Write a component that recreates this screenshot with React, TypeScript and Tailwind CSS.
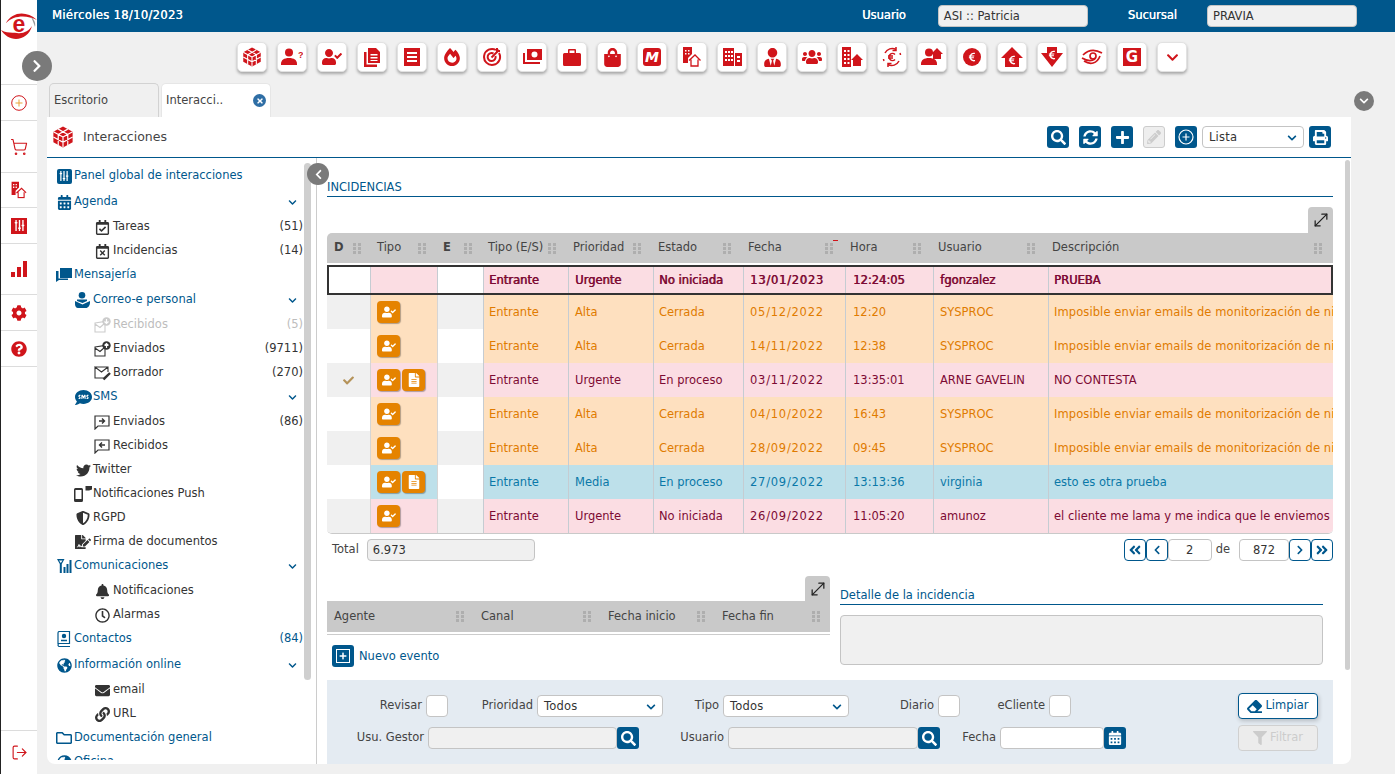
import type { ReactNode } from "react";
import { LogOut, MoveDiagonal, ShoppingCart } from "lucide-react";
import {
  FaAngleDoubleLeft,
  FaAngleDoubleRight,
  FaBell,
  FaCalendarAlt,
  FaCheck,
  FaChevronDown,
  FaChevronLeft,
  FaChevronRight,
  FaCog,
  FaEnvelope,
  FaEraser,
  FaEuroSign,
  FaFileAlt,
  FaFileSignature,
  FaFilter,
  FaFireAlt,
  FaGlobeAmericas,
  FaLink,
  FaPencilAlt,
  FaPlus,
  FaPrint,
  FaQuestionCircle,
  FaRegCalendarCheck,
  FaRegCalendarTimes,
  FaRegClock,
  FaRegFolder,
  FaSearch,
  FaShieldAlt,
  FaShoppingBag,
  FaSlidersH,
  FaSms,
  FaSyncAlt,
  FaTimes,
  FaTwitter,
  FaUserCheck,
  FaUserTie,
  FaUsers,
} from "react-icons/fa";

const RED = "#d0151b";

function Cube({ size = 18 }: { size?: number }) {
  return (
    <svg width={size} height={size} viewBox="0 0 24 24">
      <path d="M12 .5 22.500 6.200v11.600L12 23.500 1.500 17.800V6.200z" fill={RED} />
      <path
        d="M12 12v11M12 12 1.500 6.200M12 12l10.500-5.800M6.800 3.400l10.500 5.800M17.200 3.400 6.800 9.200M6.800 9.200v11.600M17.200 9.200v11.600M1.500 12 12 17.800 22.500 12"
        stroke="#fff"
        strokeWidth="1.300"
        fill="none"
      />
    </svg>
  );
}

function Person({ extra }: { extra?: ReactNode }) {
  return (
    <svg width="22" height="20" viewBox="0 0 22 20" fill={RED}>
      <circle cx="8" cy="5.500" r="4" />
      <path d="M0 17c0-4 3-6 8-6s8 2 8 6v1H0z" />
      {extra}
    </svg>
  );
}

function Target() {
  return (
    <svg width="20" height="20" viewBox="0 0 20 20" fill="none" stroke={RED} strokeWidth="2">
      <path d="M14 3a8 8 0 1 0 3 3" />
      <path d="M11.500 6.500A4 4 0 1 0 13.500 9" />
      <path d="M9.500 10.500 17 3" />
      <path d="M15 1v3h3" />
    </svg>
  );
}

function Money() {
  return (
    <svg width="20" height="18" viewBox="0 0 20 18" fill={RED}>
      <path d="M5 1h15v11H5zM9.500 6.500a3 3 0 1 0 6 0 3 3 0 1 0-6 0" fillRule="evenodd" />
      <path d="M1 5h2v9h15v2H1z" />
    </svg>
  );
}

function Receipt() {
  return (
    <svg width="16" height="18" viewBox="0 0 16 18" fill={RED}>
      <path d="M0 0h16v18H0zM3 4v2h10V4zM3 8v2h10V8zM3 12v2h10v-2z" fillRule="evenodd" />
    </svg>
  );
}

function Docs() {
  return (
    <svg width="16" height="19" viewBox="0 0 16 19" fill={RED}>
      <path d="M4 0h8l4 4v11H4zM6.500 6v1.500h7V6zM6.500 9v1.500h7V9zM6.500 12v1h7v-1z" fillRule="evenodd" />
      <path d="M0 4h2.500v12.500H13V19H0z" />
    </svg>
  );
}

function Briefcase() {
  return (
    <svg width="18" height="17" viewBox="0 0 18 17" fill={RED}>
      <path d="M6 0h6a1 1 0 0 1 1 1v3h3.500a1.500 1.500 0 0 1 1.500 1.500v10a1.500 1.500 0 0 1-1.500 1.500h-15A1.500 1.500 0 0 1 0 15.500v-10A1.500 1.500 0 0 1 1.500 4H5V1a1 1 0 0 1 1-1zm.5 1.500V4h5V1.500z" fillRule="evenodd" />
    </svg>
  );
}

function HouseBuilding() {
  return (
    <svg width="18" height="20" viewBox="0 0 18 20">
      <path d="M0 0h9v7L5 11v5H0z" fill={RED} />
      <path d="M2 3h1.500v1.500H2zM5 3h1.500v1.500H5zM2 6h1.500v1.500H2zM5 6h1.500v1.500H5z" fill="#fff" />
      <path d="M6 13.500 12 8l5.500 5.500M8 12.500V19h7v-6.500" fill="none" stroke={RED} strokeWidth="1.300" />
    </svg>
  );
}

function Office() {
  return (
    <svg width="19" height="18" viewBox="0 0 19 18" fill={RED}>
      <path d="M0 0h11v18H0zM2 3v2h2V3zM5 3v2h2V3zM8 3v2h2V3zM2 7v2h2V7zM5 7v2h2V7zM8 7v2h2V7zM2 11v2h2v-2zM5 11v2h2v-2zM8 11v2h2v-2z" fillRule="evenodd" />
      <path d="M12 5h7v13h-7zM14 8v2h3V8zM14 12v2h3v-2z" fillRule="evenodd" />
    </svg>
  );
}

function BuildingUp() {
  return (
    <svg width="21" height="20" viewBox="0 0 21 20" fill={RED}>
      <path d="M0 0h9v20H0zM2 3v2h2V3zM5.500 3v2h2V3zM2 7v2h2V7zM5.500 7v2h2V7zM2 11v2h2v-2zM5.500 11v2h2v-2zM2 15v2h2v-2zM5.500 15v2h2v-2z" fillRule="evenodd" />
      <path d="M15 7l6 6h-2v6h-8v-6H9z" />
    </svg>
  );
}

function EuroCycle() {
  return (
    <svg width="22" height="22" viewBox="0 0 22 22" fill="none" stroke={RED} strokeWidth="1.500">
      <path d="M4 7a8 8 0 0 1 11-3.500M18 15a8 8 0 0 1-11 3.500M2.500 13a8.500 8.500 0 0 0 .5 2M19.500 9a8.500 8.500 0 0 0-.5-2" />
      <path d="M15 1v3.500h-3.500M7 21v-3.500h3.500" />
      <path d="M14 8.500A3.500 3.500 0 1 0 14 13.500M7 10h5M7 12h5" />
    </svg>
  );
}

function ArrowEuro({ down }: { down?: boolean }) {
  return (
    <div className="relative flex h-5 w-6 items-center justify-center">
      <svg width="24" height="20" viewBox="0 0 24 20" fill={RED}>
        <path d={down ? "M7 0h10v6h6L12 20 1 6h6z" : "M12 0l11 11h-4v9H5v-9H1z"} />
      </svg>
      <FaEuroSign className={`absolute text-[10px] text-white ${down ? "top-[3px]" : "top-[8px]"}`} />
    </div>
  );
}

function EyeMini() {
  return (
    <svg width="22" height="18" viewBox="0 0 22 18" fill="none" stroke={RED} strokeWidth="1.700">
      <path d="M2 7c5-5 12-6 19-2M3 13c6 4 13 3 16-5M1 10c5 3 10 3 13 1" />
      <circle cx="12" cy="8" r="3" />
    </svg>
  );
}

function Logo() {
  return (
    <svg width="36" height="28" viewBox="0 0 36 28">
      <path d="M5 12C11 1 25-1 36 9 26 4 13 4 5 12z" fill={RED} />
      <path d="M30 6c3 2 5 6 4 10-1-3-2-6-4-10z" fill="#9a9a9a" />
      <path d="M0 19c6 4 12 2 16 3 6 1 12-2 15-7-2 8-9 13-16 13C9 28 3 24 0 19z" fill={RED} />
      <text x="18" y="21" textAnchor="middle" fontSize="23" fontWeight="700" fontFamily="'Liberation Sans', sans-serif" fill={RED}>
        e
      </text>
    </svg>
  );
}

function Grip() {
  return (
    <svg width="8" height="11" viewBox="0 0 8 11" fill="#aeaeae" className="shrink-0">
      <path d="M0 0h3v3H0zM5 0h3v3H5zM0 4h3v3H0zM5 4h3v3H5zM0 8h3v3H0zM5 8h3v3H5z" />
    </svg>
  );
}

function Bubbles() {
  return (
    <svg width="16" height="14" viewBox="0 0 16 14" fill="currentColor">
      <path d="M4 0h12v10H4z" />
      <path d="M0 3h2.500v7.500H12V12H3l-3 2z" />
    </svg>
  );
}

function PersonMail() {
  return (
    <svg width="16" height="16" viewBox="0 0 16 16" fill="currentColor">
      <circle cx="7" cy="3.300" r="3.300" />
      <path d="M2 7.500h10V9L7.500 11 2 9z" />
      <path d="M0 9l7.500 3.500L15 9v1.500c0 3-2 5.500-4 5.500H3c-2 0-3-2-3-4z" />
    </svg>
  );
}

function MailBadge({ up, className }: { up?: boolean; className?: string }) {
  return (
    <svg width="17" height="16" viewBox="0 0 17 16" className={className}>
      <path d="M1 6l10-1.500V15H1zM1 7l5 3.500L11 6" fill="none" stroke="currentColor" strokeWidth="1.100" />
      <circle cx="12.500" cy="4.500" r="4.200" fill="currentColor" />
      <path d={up ? "M12.500 7V2.500M10.500 4.500l2-2 2 2" : "M12.500 2v4.500M10.500 4.500l2 2 2-2"} stroke="#fff" strokeWidth="1.200" fill="none" />
    </svg>
  );
}

function MailPencil() {
  return (
    <svg width="17" height="16" viewBox="0 0 17 16" fill="none" stroke="currentColor">
      <path d="M1 2h13v5M14 9.500 10 13H1V2l6.500 5L14 2" strokeWidth="1.100" />
      <path d="M9.500 14.500 16 8" strokeWidth="2.400" />
    </svg>
  );
}

function MsgArrow({ left }: { left?: boolean }) {
  return (
    <svg width="16" height="15" viewBox="0 0 16 15" fill="none" stroke="currentColor" strokeWidth="1.200">
      <path d="M1 1h14v10H4l-3 3z" />
      <path d={left ? "M11 6H5.500M8 3.500 5.500 6 8 8.500" : "M5 6h5.500M8 3.500 10.500 6 8 8.500"} strokeWidth="1.400" />
    </svg>
  );
}

function PushIcon() {
  return (
    <svg width="18" height="16" viewBox="0 0 18 16" fill="currentColor">
      <path d="M1.500 2h6A1.500 1.500 0 0 1 9 3.500v11A1.500 1.500 0 0 1 7.500 16h-6A1.500 1.500 0 0 1 0 14.500v-11A1.500 1.500 0 0 1 1.500 2zM1.500 4v9h6V4z" fillRule="evenodd" />
      <path d="M11.500 0H18v3.500l-3 1h-3.500z" />
    </svg>
  );
}

function Antenna() {
  return (
    <svg width="15" height="14" viewBox="0 0 15 14" fill="currentColor">
      <path d="M0 0h7.500L4.800 5v9H2.800V5zM2 1.500l1.800 2.500 1.700-2.500z" fillRule="evenodd" />
      <path d="M6.500 8h2v6h-2zM9.500 5h2v9h-2zM12.500 1h2v13h-2z" />
    </svg>
  );
}

function BookIcon() {
  return (
    <svg width="14" height="16" viewBox="0 0 14 16" fill="none" stroke="currentColor" strokeWidth="1.200">
      <path d="M1 13V2a1.500 1.500 0 0 1 1.500-1.500h10V12.500h-10A1.500 1.500 0 0 0 2.500 15.500h10.500" />
      <circle cx="7" cy="5" r="1.600" fill="currentColor" />
      <path d="M4 9.500h6" strokeWidth="1.600" />
    </svg>
  );
}

const redIcon = "text-[20px] text-[#d0151b]";

const toolbarIcons: ReactNode[] = [
  <Cube key="cube" size={20} />,
  <Person
    key="question"
    extra={
      <text x="17" y="11" fontSize="9" fontWeight="700" fontFamily="'Liberation Sans', sans-serif" fill={RED}>
        ?
      </text>
    }
  />,
  <FaUserCheck key="check" className={redIcon} />,
  <Docs key="docs" />,
  <Receipt key="receipt" />,
  <FaFireAlt key="fire" className="text-[18px] text-[#d0151b]" />,
  <Target key="target" />,
  <Money key="money" />,
  <Briefcase key="case" />,
  <FaShoppingBag key="bag" className="text-[19px] text-[#d0151b]" />,
  <div key="m" className="flex h-[18px] w-[18px] items-center justify-center rounded-[3px] bg-[#d0151b] text-[14px] font-bold italic text-white">
    M
  </div>,
  <HouseBuilding key="hb" />,
  <Office key="office" />,
  <FaUserTie key="tie" className="text-[19px] text-[#d0151b]" />,
  <FaUsers key="users" className={redIcon} />,
  <BuildingUp key="bup" />,
  <EuroCycle key="cycle" />,
  <Person key="pup" extra={<path d="M16 1l6 6h-2v5h-8V7h-2z" fill={RED} />} />,
  <div key="euro" className="flex h-[18px] w-[18px] items-center justify-center rounded-full bg-[#d0151b]">
    <FaEuroSign className="text-[10px] text-white" />
  </div>,
  <ArrowEuro key="up" />,
  <ArrowEuro key="down" down />,
  <EyeMini key="eye" />,
  <div key="g" className="flex h-[18px] w-[18px] items-center justify-center bg-[#d0151b] text-[15px] font-bold text-white">
    G
  </div>,
  <FaChevronDown key="more" className="text-[13px] text-[#d0151b]" />,
];

type MenuRow = {
  label: string;
  level: 1 | 2 | 3;
  icon: ReactNode;
  count?: string;
  open?: boolean;
  gap?: string;
  muted?: boolean;
  blue?: boolean;
};

const menu: MenuRow[] = [
  { label: "Panel global de interacciones", level: 1, blue: true, icon: <div className="flex h-[15px] w-[15px] items-center justify-center rounded-[2px] bg-[#00578c]"><FaSlidersH className="rotate-90 text-[10px] text-white" /></div> },
  { label: "Agenda", level: 1, blue: true, open: true, gap: "mt-[2px]", icon: <FaCalendarAlt className="text-[15px] text-[#00578c]" /> },
  { label: "Tareas", level: 3, count: "(51)", gap: "mt-px", icon: <FaRegCalendarCheck className="text-[15px]" /> },
  { label: "Incidencias", level: 3, count: "(14)", icon: <FaRegCalendarTimes className="text-[15px]" /> },
  { label: "Mensajería", level: 1, blue: true, icon: <Bubbles /> },
  { label: "Correo-e personal", level: 2, blue: true, open: true, gap: "mt-px", icon: <PersonMail /> },
  { label: "Recibidos", level: 3, count: "(5)", muted: true, gap: "mt-px", icon: <MailBadge className="text-[#ccc]" /> },
  { label: "Enviados", level: 3, count: "(9711)", icon: <MailBadge up /> },
  { label: "Borrador", level: 3, count: "(270)", icon: <MailPencil /> },
  { label: "SMS", level: 2, blue: true, open: true, icon: <FaSms className="text-[17px] text-[#00578c]" /> },
  { label: "Enviados", level: 3, count: "(86)", gap: "mt-px", icon: <MsgArrow /> },
  { label: "Recibidos", level: 3, icon: <MsgArrow left /> },
  { label: "Twitter", level: 2, icon: <FaTwitter className="text-[15px]" /> },
  { label: "Notificaciones Push", level: 2, icon: <PushIcon /> },
  { label: "RGPD", level: 2, icon: <FaShieldAlt className="text-[14px]" /> },
  { label: "Firma de documentos", level: 2, icon: <FaFileSignature className="text-[16px]" /> },
  { label: "Comunicaciones", level: 1, blue: true, open: true, icon: <Antenna /> },
  { label: "Notificaciones", level: 3, gap: "mt-px", icon: <FaBell className="text-[15px]" /> },
  { label: "Alarmas", level: 3, icon: <FaRegClock className="text-[15px]" /> },
  { label: "Contactos", level: 1, blue: true, count: "(84)", icon: <BookIcon /> },
  { label: "Información online", level: 1, blue: true, open: true, gap: "mt-[2px]", icon: <FaGlobeAmericas className="text-[15px] text-[#00578c]" /> },
  { label: "email", level: 3, gap: "mt-px", icon: <FaEnvelope className="text-[15px]" /> },
  { label: "URL", level: 3, icon: <FaLink className="text-[15px]" /> },
  { label: "Documentación general", level: 1, blue: true, icon: <FaRegFolder className="text-[16px] text-[#00578c]" /> },
  { label: "Oficina", level: 1, blue: true, icon: <FaGlobeAmericas className="text-[15px] text-[#00578c]" /> },
];

function SidebarRow({ row }: { row: MenuRow }) {
  const indent = row.level === 1 ? "pl-0" : row.level === 2 ? "pl-[19px]" : "pl-[38px]";
  const text = row.muted ? "text-[#bdbdbd]" : row.blue ? "text-[#00578c]" : "text-[#333]";
  return (
    <div className={`flex h-6 shrink-0 items-center ${indent} ${row.gap ?? ""} ${text}`}>
      <span className="flex w-[18px] shrink-0 items-center justify-center">{row.icon}</span>
      <span className={`whitespace-nowrap ${row.level === 3 ? "ml-[2px]" : "ml-[1px]"}`}>{row.label}</span>
      {row.open && <FaChevronDown className="ml-auto mr-[6px] text-[9px] text-[#00578c]" />}
      {row.count && <span className="ml-auto">{row.count}</span>}
    </div>
  );
}

const tableCols = "grid grid-cols-[43px_67px_46px_85px_85px_90px_102px_88px_115px_1fr]";

const heads = [
  { label: "D", cls: "pl-[7px] pr-[9px] font-bold" },
  { label: "Tipo", cls: "pl-[7px] pr-[11px]" },
  { label: "E", cls: "pl-[6px] pr-[11px] font-bold" },
  { label: "Tipo (E/S)", cls: "pl-[5px] pr-[12px]" },
  { label: "Prioridad", cls: "pl-[5px] pr-[12px]" },
  { label: "Estado", cls: "pl-[5px] pr-[12px]" },
  { label: "Fecha", cls: "relative pl-[5px] pr-[12px]" },
  { label: "Hora", cls: "pl-[5px] pr-[12px]" },
  { label: "Usuario", cls: "pl-[5px] pr-[13px]" },
  { label: "Descripción", cls: "pl-[4px] pr-[11px]" },
];

type Tone = "pink" | "orange" | "blue";

const tones: Record<Tone, string> = {
  pink: "bg-[#fbdde3] text-[#7d0a33]",
  orange: "bg-[#fee0bf] text-[#e07b00]",
  blue: "bg-[#bde0ea] text-[#0a78a8]",
};

const cellStyles = [
  "pl-[5px]",
  "pl-[6px]",
  "pl-[5px]",
  "pl-[6px] tracking-[0.75px]",
  "pl-[7px]",
  "pl-[6px]",
  "pl-[5px]",
];

const orangeDesc = "Imposible enviar emails de monitorización de niveles";

const rows: { tone: Tone; cells: string[]; doc?: boolean; done?: boolean }[] = [
  { tone: "orange", cells: ["Entrante", "Alta", "Cerrada", "05/12/2022", "12:20", "SYSPROC", orangeDesc] },
  { tone: "orange", cells: ["Entrante", "Alta", "Cerrada", "14/11/2022", "12:38", "SYSPROC", orangeDesc] },
  { tone: "pink", done: true, doc: true, cells: ["Entrante", "Urgente", "En proceso", "03/11/2022", "13:35:01", "ARNE GAVELIN", "NO CONTESTA"] },
  { tone: "orange", cells: ["Entrante", "Alta", "Cerrada", "04/10/2022", "16:43", "SYSPROC", orangeDesc] },
  { tone: "orange", cells: ["Entrante", "Alta", "Cerrada", "28/09/2022", "09:45", "SYSPROC", orangeDesc] },
  { tone: "blue", doc: true, cells: ["Entrante", "Media", "En proceso", "27/09/2022", "13:13:36", "virginia", "esto es otra prueba"] },
  { tone: "pink", cells: ["Entrante", "Urgente", "No iniciada", "26/09/2022", "11:05:20", "amunoz", "el cliente me lama y me indica que le enviemos la factura"] },
];

function Cell({ children, tone, className }: { children: ReactNode; tone: Tone; className?: string }) {
  return (
    <div className={`flex min-w-0 items-center overflow-hidden whitespace-nowrap border-l border-[#c5ccd2] pt-[2px] ${tones[tone]} ${className ?? ""}`}>
      {children}
    </div>
  );
}

function Badge({ children }: { children: ReactNode }) {
  return (
    <span className="flex h-[22px] w-[23px] items-center justify-center rounded-[4px] bg-[#e58300] text-[14px] text-white shadow-[1px_1px_1px_rgba(0,0,0,0.3)]">
      {children}
    </span>
  );
}

function BlueBtn({ children }: { children: ReactNode }) {
  return (
    <span className="flex h-[22px] w-[22px] shrink-0 items-center justify-center rounded-[3px] bg-[#00578c] text-[15px] text-white">
      {children}
    </span>
  );
}

function PagerBtn({ children }: { children: ReactNode }) {
  return (
    <span className="flex h-[22px] w-[22px] items-center justify-center rounded-[4px] border border-[#00578c] bg-white text-[#00578c]">
      {children}
    </span>
  );
}

function Field({ className, children }: { className: string; children?: ReactNode }) {
  return (
    <div className={`flex h-[22px] shrink-0 items-center rounded-[4px] border border-[#c4c4c4] px-[5px] pt-px ${className}`}>
      {children}
    </div>
  );
}

function SelectBox({ className, label }: { className: string; label: string }) {
  return (
    <Field className={`bg-white ${className}`}>
      <span className="ml-px tracking-[0.2px]">{label}</span>
      <FaChevronDown className="ml-auto mr-[1px] text-[10px] text-[#00578c]" />
    </Field>
  );
}

function Label({ className, children }: { className: string; children: ReactNode }) {
  return <span className={`mr-1 shrink-0 text-right text-[#444] ${className}`}>{children}</span>;
}

function RailItem({ className, children }: { className: string; children: ReactNode }) {
  return (
    <div className={`flex shrink-0 items-center justify-center border-b border-[#dcdcdc] ${className}`}>{children}</div>
  );
}

export default function App() {
  return (
    <div className="relative flex h-screen w-full overflow-hidden bg-[#f0f0f0] font-['DejaVu_Sans',sans-serif] text-[11.5px] text-[#333]">
      <aside className="flex w-[37px] shrink-0 flex-col border-l border-[#222] bg-white">
        <div className="h-[85px] shrink-0 border-b border-[#dcdcdc] pt-[11px]">
          <Logo />
        </div>
        <RailItem className="h-9">
          <svg width="16" height="16" viewBox="0 0 16 16" fill="none" stroke={RED}>
            <circle cx="8" cy="8" r="7.300" />
            <path d="M8 4.500v7M4.500 8h7" stroke="#e9a23b" />
          </svg>
        </RailItem>
        <RailItem className="h-[52px]">
          <ShoppingCart size={18} color={RED} strokeWidth={1.5} />
        </RailItem>
        <RailItem className="h-[35px]">
          <div className="scale-[0.85]">
            <HouseBuilding />
          </div>
        </RailItem>
        <RailItem className="h-9">
          <div className="flex h-[16px] w-[16px] items-center justify-center bg-[#d0151b]">
            <FaSlidersH className="rotate-90 text-[11px] text-white" />
          </div>
        </RailItem>
        <RailItem className="h-[51px]">
          <svg width="16" height="16" viewBox="0 0 16 16" fill={RED}>
            <path d="M0 11h4v5H0zM6 6h4v10H6zM12 0h4v16h-4z" />
          </svg>
        </RailItem>
        <RailItem className="h-9">
          <FaCog className="text-[16px] text-[#d0151b]" />
        </RailItem>
        <RailItem className="h-9">
          <FaQuestionCircle className="text-[16px] text-[#d0151b]" />
        </RailItem>
        <div className="mt-auto flex h-[44px] items-center justify-center border-t border-[#dcdcdc]">
          <LogOut size={17} color={RED} strokeWidth={1.6} />
        </div>
      </aside>

      <div className="flex min-w-0 flex-1 flex-col">
        <header className="flex h-8 shrink-0 items-center bg-[#00578c] pl-[15px] pr-[38px] text-white">
          <span className="tracking-[0.35px] [text-shadow:0.3px_0_0_currentColor]">Miércoles 18/10/2023</span>
          <span className="ml-auto [text-shadow:0.3px_0_0_currentColor]">Usuario</span>
          <div className="ml-[32px] flex h-[22px] w-[150px] items-center rounded-[4px] border border-[#c4c4c4] bg-[#f0f0f0] px-[5px] pt-px text-[#333]">
            ASI :: Patricia
          </div>
          <span className="ml-[40px] [text-shadow:0.3px_0_0_currentColor]">Sucursal</span>
          <div className="ml-[30px] flex h-[22px] w-[150px] items-center rounded-[4px] border border-[#c4c4c4] bg-[#f0f0f0] px-[5px] pt-px text-[#333]">
            PRAVIA
          </div>
        </header>

        <div className="flex h-[51px] shrink-0 gap-[10px] pl-[200px] pt-[10px]">
          {toolbarIcons.map((icon, i) => (
            <div
              key={i}
              className="flex h-[30px] w-[30px] shrink-0 items-center justify-center rounded-[5px] border border-[#e2e2e2] bg-white shadow-[0_2px_3px_rgba(0,0,0,0.3)]"
            >
              {icon}
            </div>
          ))}
        </div>

        <div className="flex h-[34px] shrink-0 gap-[2px] pl-[12px]">
          <div className="flex w-[110px] items-center rounded-t-[5px] border border-b-0 border-[#d2d2d2] pl-[4px] text-[#444]">
            Escritorio
          </div>
          <div className="flex w-[110px] items-center rounded-t-[5px] border border-b-0 border-[#e6e6e6] bg-white pl-[4px] text-[#444]">
            Interacci..
            <span className="ml-auto mr-[4px] flex h-[13px] w-[13px] items-center justify-center rounded-full bg-[#2f6ea5]">
              <FaTimes className="text-[8px] text-white" />
            </span>
          </div>
        </div>

        <div className="ml-[10px] flex h-[647px] w-[1304px] shrink-0 flex-col overflow-hidden rounded-b-[8px] bg-white">
          <div className="flex h-[41px] shrink-0 items-center border-b border-[#00578c] pl-[5px] pr-[20px]">
            <Cube size={22} />
            <span className="ml-[9px] text-[12.5px] text-[#444]">Interacciones</span>
            <div className="ml-auto flex items-center">
              <BlueBtn><FaSearch /></BlueBtn>
              <span className="ml-[10px]"><BlueBtn><FaSyncAlt /></BlueBtn></span>
              <span className="ml-[10px]"><BlueBtn><FaPlus /></BlueBtn></span>
              <span className="ml-[10px] flex h-[22px] w-[22px] items-center justify-center rounded-[3px] border border-[#ccc] bg-[#eee] text-[14px] text-[#ccc]">
                <FaPencilAlt />
              </span>
              <span className="ml-[10px]">
                <BlueBtn>
                  <svg width="16" height="16" viewBox="0 0 16 16" fill="none" stroke="#fff" strokeWidth="1.200">
                    <circle cx="8" cy="8" r="7" />
                    <path d="M8 4.500v7M4.500 8h7" />
                  </svg>
                </BlueBtn>
              </span>
              <SelectBox className="ml-[5px] w-[102px]" label="Lista" />
              <span className="ml-[5px]"><BlueBtn><FaPrint /></BlueBtn></span>
            </div>
          </div>

          <div className="flex min-h-0 flex-1">
            <div className="w-[270px] shrink-0 border-r border-[#ccc]">
              <nav className="flex h-[602px] flex-col overflow-hidden pl-[8px] pr-[13px] pt-[6px]">
                {menu.map((row, i) => (
                  <SidebarRow key={i} row={row} />
                ))}
              </nav>
            </div>

            <main className="flex min-w-0 flex-1 flex-col pl-[10px] pr-[18px] pt-[20px]">
              <div className="h-[19px] shrink-0 border-b border-[#00578c] leading-[18px] text-[#00578c]">
                INCIDENCIAS
              </div>

              <div className="mt-[10px] flex h-[26px] shrink-0 justify-end">
                <span className="flex w-[25px] items-center justify-center rounded-t-[4px] bg-[#c9c9c9] text-[#222]">
                  <MoveDiagonal size={20} strokeWidth={1.5} />
                </span>
              </div>
              <div className={`${tableCols} h-[30px] shrink-0 rounded-tl-[5px] bg-[#c9c9c9] text-[#444]`}>
                {heads.map((h) => (
                  <div key={h.label} className={`flex items-center justify-between ${h.cls}`}>
                    <span>{h.label}</span>
                    <Grip />
                    {h.label === "Fecha" && <span className="absolute right-[7px] top-[7px] h-px w-[5px] bg-[#d0151b]" />}
                  </div>
                ))}
              </div>

              <div className={`${tableCols} mt-[2px] h-[30px] shrink-0 outline outline-2 -outline-offset-2 outline-[#333] [text-shadow:0.6px_0_0_currentColor]`}>
                <div className="bg-white" />
                <Cell tone="pink"> </Cell>
                <div className="border-l border-[#c5ccd2] bg-white" />
                {["Entrante", "Urgente", "No iniciada", "13/01/2023", "12:24:05", "fgonzalez", "PRUEBA"].map((c, j) => (
                  <Cell key={c} tone="pink" className={cellStyles[j]}>{c}</Cell>
                ))}
              </div>

              <div className="shrink-0 overflow-hidden rounded-b-[5px] border-b border-[#c9c9c9]">
                {rows.map((r, i) => {
                  const side = i % 2 === 0 ? "bg-[#f0f0f0]" : "bg-white";
                  return (
                    <div key={i} className={`${tableCols} h-[34px]`}>
                      <div className={`flex items-center justify-center ${side}`}>
                        {r.done && <FaCheck className="text-[11px] text-[#b5935a]" />}
                      </div>
                      <div className={`flex items-center gap-[2px] border-l border-[#d5d5d5] pl-[6px] ${tones[r.tone]}`}>
                        <Badge><FaUserCheck /></Badge>
                        {r.doc && <Badge><FaFileAlt /></Badge>}
                      </div>
                      <div className={`border-l border-[#d5d5d5] ${side}`} />
                      {r.cells.map((c, j) => (
                        <Cell key={j} tone={r.tone} className={`${cellStyles[j]} ${r.tone === "orange" && j === 6 ? "tracking-[0.1px]" : ""}`}>{c}</Cell>
                      ))}
                    </div>
                  );
                })}
              </div>

              <div className="mt-[5px] flex h-[22px] shrink-0 items-center">
                <span className="ml-[5px] mr-[8px] text-[#444]">Total</span>
                <Field className="w-[168px] bg-[#f0f0f0]">6.973</Field>
                <div className="ml-auto flex items-center">
                  <PagerBtn><FaAngleDoubleLeft className="text-[14px]" /></PagerBtn>
                  <PagerBtn><FaChevronLeft className="text-[10px]" /></PagerBtn>
                  <Field className="w-[44px] justify-center bg-white">2</Field>
                  <span className="ml-[4px] mr-[9px] text-[#444]">de</span>
                  <Field className="w-[50px] justify-center bg-white">872</Field>
                  <PagerBtn><FaChevronRight className="text-[10px]" /></PagerBtn>
                  <PagerBtn><FaAngleDoubleRight className="text-[14px]" /></PagerBtn>
                </div>
              </div>

              <div className="mt-[15px] flex shrink-0">
                <div className="w-[503px] shrink-0">
                  <div className="flex h-[25px] justify-end">
                    <span className="flex w-[25px] items-center justify-center rounded-t-[4px] bg-[#c9c9c9] text-[#222]">
                      <MoveDiagonal size={20} strokeWidth={1.5} />
                    </span>
                  </div>
                  <div className="grid h-[31px] grid-cols-[147px_127px_114px_115px] bg-[#c9c9c9] text-[#444]">
                    {["Agente", "Canal", "Fecha inicio", "Fecha fin"].map((h) => (
                      <div key={h} className="flex items-center justify-between pl-[7px] pr-[10px]">
                        {h}
                        <Grip />
                      </div>
                    ))}
                  </div>
                  <div className="mt-[2px] border-t border-[#ccc]" />
                  <div className="ml-[5px] mt-[10px] flex items-center gap-[5px] text-[#00578c]">
                    <BlueBtn>
                      <span className="flex h-[14px] w-[14px] items-center justify-center border-[1.5px] border-white text-[8px]">
                        <FaPlus />
                      </span>
                    </BlueBtn>
                    <span className="pt-px">Nuevo evento</span>
                  </div>
                </div>
                <div className="ml-[10px] w-[483px] shrink-0 pt-[10px]">
                  <div className="h-[19px] border-b border-[#00578c] pt-px text-[#00578c]">Detalle de la incidencia</div>
                  <div className="mt-[10px] h-[50px] rounded-[4px] border border-[#c4c4c4] bg-[#f0f0f0]" />
                </div>
              </div>

              <div className="mt-[13px] flex h-[84px] shrink-0 bg-[#e4ebf2] pr-[15px]">
                <div className="flex flex-col gap-[10px] pt-[15px]">
                  <div className="flex items-center">
                    <Label className="w-[95px]">Revisar</Label>
                    <Field className="w-[22px] bg-white" />
                    <Label className="w-[85px]">Prioridad</Label>
                    <SelectBox className="w-[126px]" label="Todos" />
                    <Label className="w-[56px]">Tipo</Label>
                    <SelectBox className="w-[126px]" label="Todos" />
                    <Label className="w-[85px]">Diario</Label>
                    <Field className="w-[22px] bg-white" />
                    <Label className="w-[85px]">eCliente</Label>
                    <Field className="w-[22px] bg-white" />
                  </div>
                  <div className="flex items-center">
                    <Label className="w-[97px]">Usu. Gestor</Label>
                    <Field className="w-[189px] bg-[#f0f0f0]" />
                    <BlueBtn><FaSearch /></BlueBtn>
                    <Label className="w-[85px]">Usuario</Label>
                    <Field className="w-[190px] bg-[#f0f0f0]" />
                    <BlueBtn><FaSearch /></BlueBtn>
                    <Label className="w-[56px]">Fecha</Label>
                    <Field className="w-[104px] bg-white" />
                    <BlueBtn><FaCalendarAlt className="text-[14px]" /></BlueBtn>
                  </div>
                </div>
                <div className="ml-auto flex w-[80px] flex-col gap-[6px] pt-[13px]">
                  <div className="flex h-[26px] items-center justify-center gap-[3px] rounded-[4px] border border-[#00578c] bg-white text-[#00578c] shadow-[1px_2px_4px_rgba(0,0,0,0.2)]">
                    <FaEraser className="text-[15px]" />
                    Limpiar
                  </div>
                  <div className="flex h-[26px] items-center justify-center gap-[3px] rounded-[4px] border border-[#d0d0d0] bg-[#ececec] text-[#ccc]">
                    <FaFilter className="text-[14px]" />
                    Filtrar
                  </div>
                </div>
              </div>
            </main>
          </div>
        </div>
      </div>

      <span className="absolute left-[22px] top-[51px] flex h-[30px] w-[30px] items-center justify-center rounded-full bg-[#7a7a7a] text-[14px] text-white">
        <FaChevronRight />
      </span>
      <span className="absolute left-[1354px] top-[91px] flex h-5 w-5 items-center justify-center rounded-full bg-[#7a7a7a] text-[10px] text-white">
        <FaChevronDown />
      </span>
      <span className="absolute left-[304px] top-[163px] h-[517px] w-[7px] rounded-[4px] bg-[#cfcfcf]" />
      <span className="absolute left-[307px] top-[163px] flex h-[22px] w-[22px] items-center justify-center rounded-full bg-[#7a7a7a] text-[11px] text-white">
        <FaChevronLeft />
      </span>
      <span className="absolute left-[1345px] top-[160px] h-[510px] w-[5px] rounded-[3px] bg-[#cfcfcf]" />
    </div>
  );
}
